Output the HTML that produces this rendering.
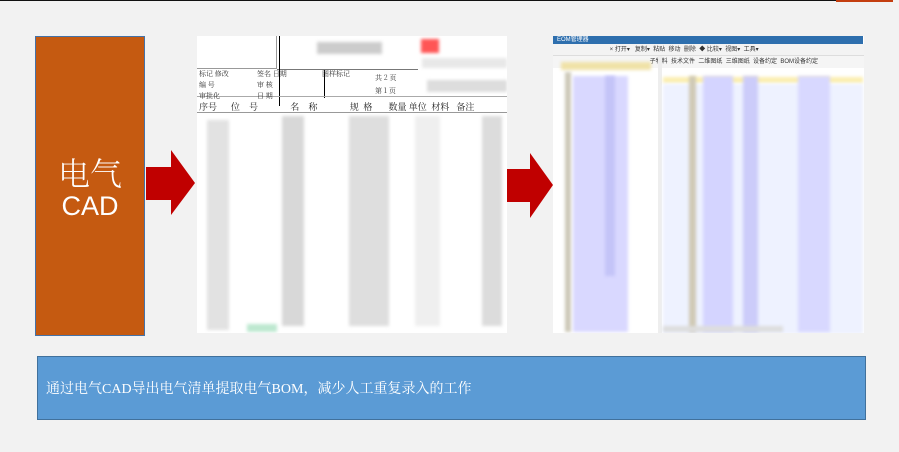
<!DOCTYPE html>
<html><head><meta charset="utf-8"><style>
*{margin:0;padding:0;box-sizing:border-box}
body{width:899px;height:452px;background:#f2f2f2;position:relative;overflow:hidden;font-family:"Liberation Sans","Noto Sans CJK SC",sans-serif}
.a{position:absolute}
.b{position:absolute;filter:blur(1.5px)}
</style></head><body>
<div class="a" style="left:0;top:0;width:836px;height:1px;background:#111"></div>
<div class="a" style="left:836px;top:0;width:57px;height:2px;background:#c43e0f"></div>

<div class="a" style="left:35px;top:36px;width:110px;height:300px;background:#c55a11;border:1px solid #4472a8;color:#fff;text-align:center">
<div class="a" style="left:0;top:112px;width:108px;font-size:32px;font-family:'Noto Serif CJK SC',serif;font-weight:300">电气</div>
<div class="a" style="left:0;top:154px;width:108px;font-size:27px">CAD</div>
</div>

<svg class="a" style="left:140px;top:140px" width="60" height="85"><polygon points="6,27 31,27 31,10 55,43 31,75 31,60 6,60" fill="#c00000"/></svg>
<svg class="a" style="left:500px;top:145px" width="60" height="80"><polygon points="7,24 30,24 30,8 53,40 30,73 30,57 7,57" fill="#c00000"/></svg>

<!-- left image -->
<div class="a" style="left:197px;top:36px;width:310px;height:297px;background:#fff;overflow:hidden">
<div class="a" style="left:0;top:0;width:80px;height:33px;border-right:1px solid #999;border-bottom:1px solid #999"></div>
<div class="a" style="left:80px;top:0;width:141px;height:34px;border-bottom:1px solid #777"></div>
<div class="a" style="left:82px;top:0;width:1px;height:70px;background:#000"></div>
<div class="a" style="left:127px;top:34px;width:1px;height:28px;background:#000"></div>
<div class="a" style="left:0;top:60px;width:310px;height:1px;background:#aaa"></div>
<div class="a" style="left:0;top:76px;width:310px;height:1px;background:#999"></div>
<div class="b" style="left:120px;top:6px;width:65px;height:12px;background:#ccc"></div>
<div class="b" style="left:224px;top:3px;width:18px;height:14px;background:#f55"></div>
<div class="b" style="left:225px;top:22px;width:85px;height:10px;background:#e8e8e8"></div>
<div class="b" style="left:230px;top:44px;width:80px;height:12px;background:#ddd"></div>
<div class="a" style="left:2px;top:33px;font-size:7px;color:#333;line-height:11px;font-family:'Noto Serif CJK SC',serif">标记 修改<br>编 号<br>审批化</div>
<div class="a" style="left:60px;top:33px;font-size:7px;color:#333;line-height:11px;font-family:'Noto Serif CJK SC',serif">签名 日期<br>审 核<br>日 期</div>
<div class="a" style="left:125px;top:33px;font-size:7px;color:#333;font-family:'Noto Serif CJK SC',serif">图样标记</div>
<div class="a" style="left:178px;top:36px;font-size:7px;color:#333;line-height:13px;font-family:'Noto Serif CJK SC',serif">共 2 页<br>第 1 页</div>
<div class="a" style="left:2px;top:64px;width:308px;font-size:9px;color:#222;font-family:'Noto Serif CJK SC',serif;white-space:pre">序号      位    号              名    称              规  格       数量 单位  材料   备注</div>
<div class="b" style="left:10px;top:84px;width:22px;height:210px;background:#e2e2e2"></div>
<div class="b" style="left:85px;top:80px;width:22px;height:210px;background:#d8d8d8"></div>
<div class="b" style="left:152px;top:80px;width:40px;height:210px;background:#dedede"></div>
<div class="b" style="left:218px;top:80px;width:25px;height:210px;background:#efefef"></div>
<div class="b" style="left:285px;top:80px;width:20px;height:210px;background:#dcdcdc"></div>
<div class="b" style="left:50px;top:288px;width:30px;height:8px;background:#bde8d0"></div>
</div>

<!-- right image -->
<div class="a" style="left:553px;top:36px;width:311px;height:297px;background:#fff;overflow:hidden">
<div class="a" style="left:0;top:0;width:310px;height:8px;background:#2e6fae"></div>
<div class="a" style="left:4px;top:0;font-size:6px;color:#fff;line-height:8px">EOM管理器</div>
<div class="a" style="left:0;top:8px;width:311px;height:12px;background:#f3f3f3;border-bottom:1px solid #ddd;font-size:6px;color:#333;line-height:12px;white-space:pre">                                  × 打开▾   复制▾  粘贴  移动  删除  ◆ 比较▾  视图▾  工具▾</div>
<div class="a" style="left:0;top:20px;width:311px;height:12px;background:#f5f5f5;font-size:6px;color:#333;line-height:12px;white-space:pre">                                                          子物料  技术文件  二维图纸  三维图纸  设备约定  BOM设备约定</div>
<div class="a" style="left:105px;top:20px;width:4px;height:277px;background:#eee"></div>
<div class="b" style="left:8px;top:26px;width:90px;height:8px;background:#f0e2a8"></div>
<div class="b" style="left:110px;top:41px;width:200px;height:6px;background:#fbeeb0"></div>
<div class="b" style="left:12px;top:36px;width:6px;height:260px;background:#cdc9b8"></div>
<div class="b" style="left:20px;top:40px;width:55px;height:256px;background:#d9d8ff"></div>
<div class="b" style="left:52px;top:40px;width:10px;height:200px;background:#c4c4f8"></div>
<div class="b" style="left:110px;top:48px;width:200px;height:250px;background:#eef2ff"></div>
<div class="b" style="left:136px;top:40px;width:7px;height:256px;background:#cfc9b5"></div>
<div class="b" style="left:150px;top:40px;width:30px;height:256px;background:#d4d4ff"></div>
<div class="b" style="left:190px;top:40px;width:15px;height:256px;background:#ccccfa"></div>
<div class="b" style="left:245px;top:40px;width:32px;height:256px;background:#d8d8ff"></div>
<div class="b" style="left:110px;top:290px;width:120px;height:6px;background:#ddd"></div>
</div>

<div class="a" style="left:37px;top:356px;width:829px;height:64px;background:#5b9bd5;border:1px solid #41719c"></div>
<div class="a" style="left:46px;top:378px;font-size:14px;color:#fff;font-family:'Liberation Serif','Noto Serif CJK SC',serif">通过电气CAD导出电气清单提取电气BOM，减少人工重复录入的工作</div>
</body></html>
